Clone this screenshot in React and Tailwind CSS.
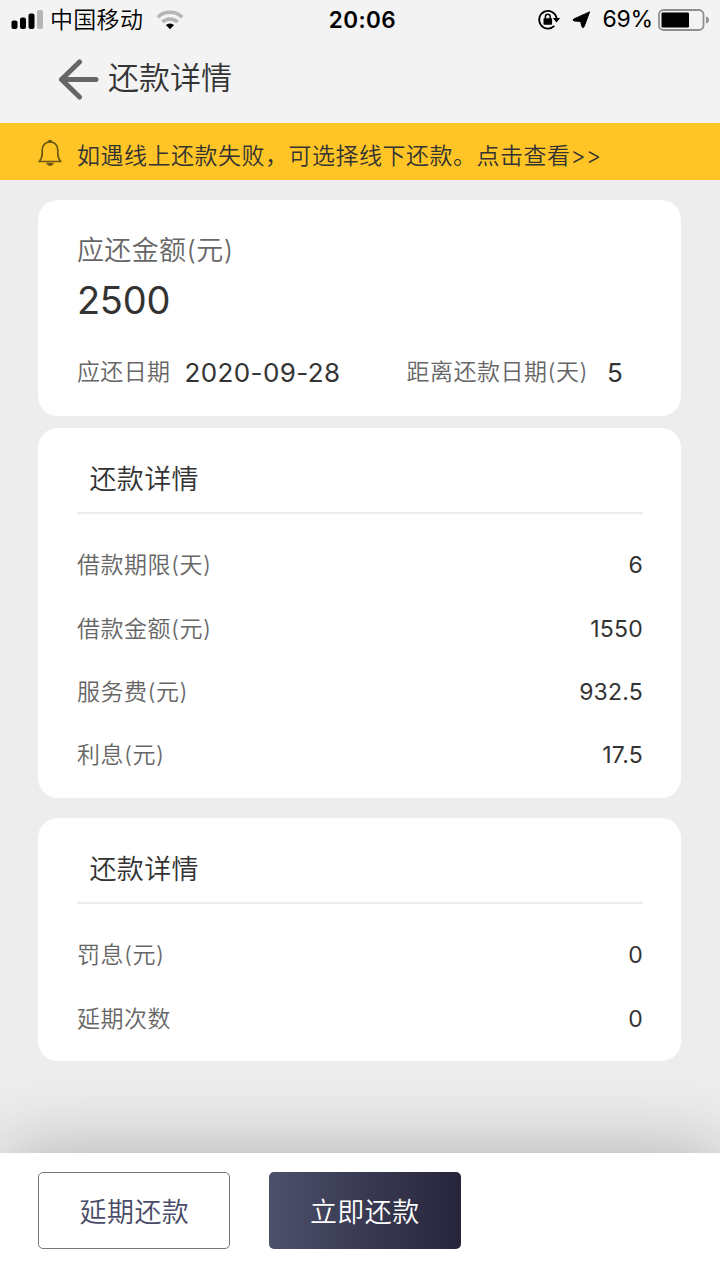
import React from 'react';

const detalle = [
  { label: '借款期限(天)', value: '6' },
  { label: '借款金额(元)', value: '1550' },
  { label: '服务费(元)', value: '932.5' },
  { label: '利息(元)', value: '17.5' },
];

const mora = [
  { label: '罚息(元)', value: '0' },
  { label: '延期次数', value: '0' },
];

function StatusBar() {
  return (
    <div className="h-[39px] grid grid-cols-[1fr_auto_1fr] items-center pl-[11px] pr-[10px] text-black">
      <div className="h-[39px] flex items-center">
        {/* señal */}
        <svg width="32" height="20" viewBox="0 0 32 20">
          <rect x="0.5" y="10.5" width="6" height="8.5" rx="2" />
          <rect x="9" y="7.5" width="6" height="11.5" rx="2" />
          <rect x="17.5" y="3.5" width="6" height="15.5" rx="2" />
          <rect x="26" y="0" width="6" height="19" rx="2" fill="#b5b5b5" />
        </svg>
        <span className="ml-[7px] pt-px text-[23px] tracking-[0.3px]">中国移动</span>
        {/* wifi */}
        <svg width="28" height="20" viewBox="0 0 28 20" fill="none" className="ml-[13px]">
          <path d="M1.8 7.2 A17.6 17.6 0 0 1 26.2 7.2" stroke="#b5b5b5" strokeWidth="3.6" />
          <path d="M6.4 12 A11 11 0 0 1 21.6 12" stroke="#b5b5b5" strokeWidth="3.6" />
          <path d="M9.9 15 A6 6 0 0 1 18.1 15 L14 19.2 Z" fill="#000" />
        </svg>
      </div>
      <span className="pl-1 text-[22.5px] font-semibold tracking-[0.4px]">20:06</span>
      <div className="flex items-center justify-end">
        {/* bloqueo de rotación */}
        <svg width="24" height="22" viewBox="0 0 24 22" fill="none">
          <path d="M17.3 16.9 A8.8 8.8 0 1 1 19.6 9" stroke="#000" strokeWidth="1.8" />
          <path d="M15.8 9 H23.2 L19.5 13.6 Z" fill="#000" />
          <rect x="6.5" y="9.2" width="8.6" height="6.6" rx="0.8" fill="#000" />
          <path d="M8.4 10 V7.6 A2.4 2.4 0 0 1 13.2 7.6 V10" stroke="#000" strokeWidth="1.5" />
        </svg>
        {/* ubicación */}
        <svg width="19" height="18" viewBox="0 0 19 18" className="ml-[11px]" stroke="#000" strokeWidth="1" strokeLinejoin="round">
          <path d="M17.6 0.9 L12.2 15.6 Q11 17.6 10 15.8 L8.6 10.4 L2 9.9 Q0 9 1.8 8 Z" />
        </svg>
        <span className="ml-[11px] text-[23px] font-normal tracking-[-0.2px]">69%</span>
        {/* batería */}
        <svg width="52" height="22" viewBox="0 0 52 22" className="ml-[5px]">
          <rect x="1" y="1" width="44.5" height="20" rx="4.5" fill="none" stroke="#8f8f8f" strokeWidth="1.8" />
          <rect x="3.5" y="3.5" width="27.5" height="15" rx="1.2" />
          <path d="M48 7.5 Q51 8.5 51 11 Q51 13.5 48 14.5 Z" fill="#8f8f8f" />
        </svg>
      </div>
    </div>
  );
}

function Detalle({ filas, className }) {
  return (
    <section className={`bg-white rounded-[20px] px-[38.5px] ${className}`}>
      <h2 className="h-[86px] pt-[21px] pl-[12.5px] border-b-2 border-[#ececec] flex items-center text-[27px] tracking-[0.4px] text-[#333]">
        还款详情
      </h2>
      <div className="pt-5">
        {filas.map((fila) => (
          <div key={fila.label} className="h-[63.3px] flex items-center justify-between text-[23px]">
            <span className="tracking-[0.5px] text-[#666]">{fila.label}</span>
            <span className="font-normal tracking-[0.2px] text-[#333]">{fila.value}</span>
          </div>
        ))}
      </div>
    </section>
  );
}

export default function App() {
  return (
    <div className="w-[720px] h-[1280px] flex flex-col overflow-hidden bg-[#ededed] whitespace-nowrap font-[350] font-['Inter','Noto_Sans_CJK_SC',sans-serif]">
      <header className="h-[123px] bg-[#f3f3f3]">
        <StatusBar />
        <div className="h-[79px] pl-[58px] flex items-center">
          <svg width="41" height="41" viewBox="0 0 41 41" fill="none" stroke="#666" strokeWidth="5" strokeLinecap="round" strokeLinejoin="round" className="mt-0.5">
            <path d="M21.5 3 L3.5 20.5 L21.5 38" />
            <path d="M4 20.5 H38" />
          </svg>
          <h1 className="ml-[9px] text-[31px] text-[#333]">还款详情</h1>
        </div>
      </header>

      <div className="h-[57px] pl-[38px] flex items-center bg-[#ffc526] text-[#333]">
        <svg width="24" height="28" viewBox="0 0 24 28" fill="none" stroke="#6b5712" strokeWidth="1.7" strokeLinejoin="round" className="mt-0.5">
          <path d="M1.2 22.5 C3.5 20 4.2 18 4.2 14.5 V11 C4.2 6.2 7.5 3 12 3 C16.5 3 19.8 6.2 19.8 11 V14.5 C19.8 18 20.5 20 22.8 22.5 Z" />
          <path d="M10.3 2.8 A1.8 1.8 0 0 1 13.7 2.8 Z" fill="#6b5712" />
          <path d="M9.2 24.5 H14.8 Q12 28 9.2 24.5 Z" fill="#6b5712" />
        </svg>
        <p className="ml-[15px] pt-2.5 text-[23px] tracking-[0.5px]">如遇线上还款失败，可选择线下还款。点击查看&gt;&gt;</p>
      </div>

      <main className="flex-1 pl-[38.4px] pr-[38.6px] pt-5">
        <section className="h-[216px] bg-white rounded-[20px] px-[38.5px] pt-[33px]">
          <p className="h-9 leading-9 text-[27px] tracking-[0.4px] text-[#666]">应还金额(元)</p>
          <p className="h-16 leading-[62px] text-[38px] font-normal tracking-[-0.2px] text-[#333]">2500</p>
          <div className="mt-[19px] h-10 flex items-center">
            <span className="pt-px text-[23px] tracking-[0.4px] text-[#666]">应还日期</span>
            <span className="ml-[14px] text-[26px] font-normal tracking-[0.4px] text-[#333]">2020-09-28</span>
            <span className="ml-auto pt-px text-[23px] tracking-[0.5px] text-[#666]">距离还款日期(天)</span>
            <span className="ml-[19px] mr-[20px] text-[26px] font-normal text-[#333]">5</span>
          </div>
        </section>
        <Detalle filas={detalle} className="mt-3 h-[370px]" />
        <Detalle filas={mora} className="mt-5 h-[243px]" />
      </main>

      <footer className="h-[127px] px-[38.4px] pt-[19px] flex gap-[38.4px] bg-white text-[27px] tracking-[0.4px] shadow-[4px_0_77px_rgba(0,0,0,0.27)]">
        <button className="w-[192px] h-[77px] pt-1.5 rounded-[5px] border-[1.5px] border-[#777] bg-white text-[#484c68]">
          延期还款
        </button>
        <button className="w-[192px] h-[77px] pt-1.5 rounded-[5px] bg-linear-to-r from-[#4c5069] to-[#27253c] text-white">
          立即还款
        </button>
      </footer>
    </div>
  );
}
